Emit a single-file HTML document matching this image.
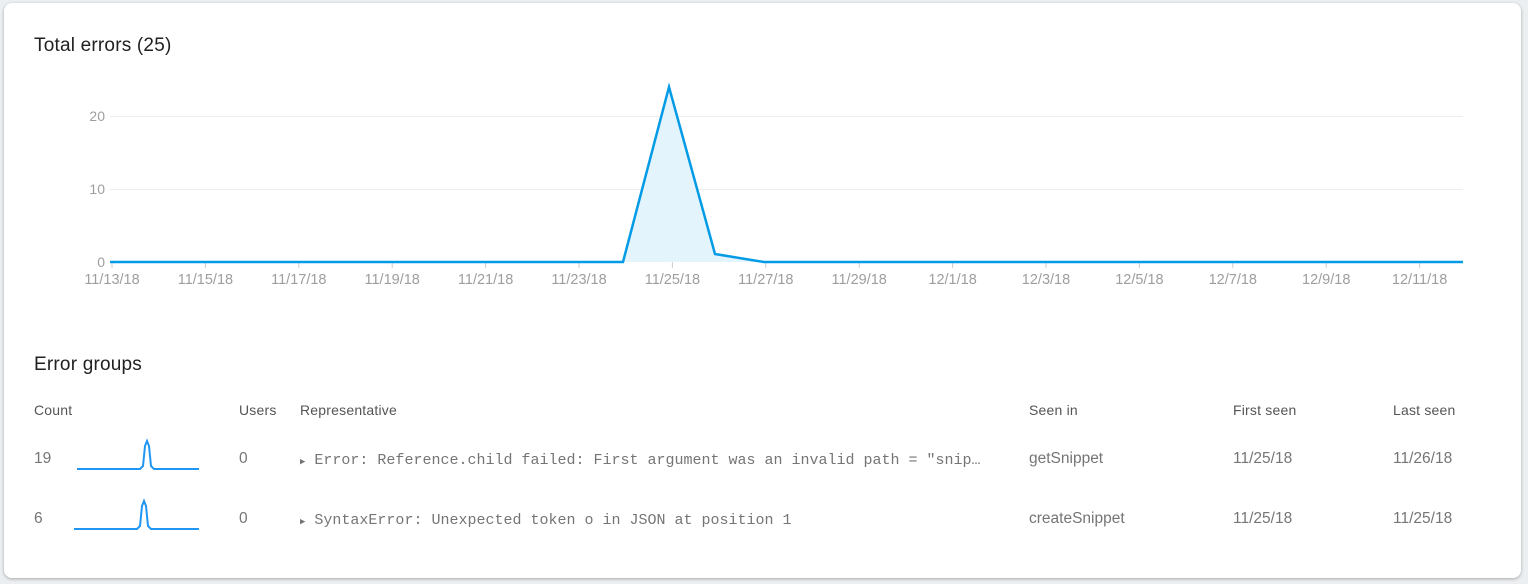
<!DOCTYPE html>
<html><head><meta charset="utf-8"><style>
body{margin:0;width:1528px;height:584px;background:#eceff1;font-family:"Liberation Sans",sans-serif;position:relative;overflow:hidden}
.card{position:absolute;left:4px;top:3px;width:1517px;height:575px;background:#fff;border-radius:8px;box-shadow:0 1px 3px rgba(0,0,0,.3)}
.t{position:absolute;white-space:nowrap}
.h{font-size:19px;color:#212121;letter-spacing:0.2px}
.th{font-size:14px;color:#555;top:402px;letter-spacing:0.2px}
.td{font-size:15.5px;color:#757575}
.mono{font-family:"Liberation Mono",monospace;font-size:15px;color:#757575}
</style></head><body>
<div class="card"></div>
<div class="t h" style="left:34px;top:35px">Total errors (25)</div>
<svg style="position:absolute;left:0;top:0" width="1528" height="300">
<line x1="110" y1="116.5" x2="1463" y2="116.5" stroke="#eee"/>
<line x1="110" y1="189.5" x2="1463" y2="189.5" stroke="#eee"/>
<g font-family="Liberation Sans" font-size="14" fill="#9e9e9e" text-anchor="end">
<text x="105" y="121">20</text><text x="105" y="194">10</text><text x="105" y="267">0</text></g>
<polygon points="110,262 623,262 669,87 715,254 764,262 1463,262" fill="#e3f4fc"/>
<g stroke="#ccc" stroke-width="1">
<line x1="112" y1="262" x2="112" y2="268"/><line x1="205.4" y1="262" x2="205.4" y2="268"/><line x1="298.8" y1="262" x2="298.8" y2="268"/><line x1="392.2" y1="262" x2="392.2" y2="268"/><line x1="485.6" y1="262" x2="485.6" y2="268"/><line x1="579" y1="262" x2="579" y2="268"/><line x1="672.4" y1="262" x2="672.4" y2="268"/><line x1="765.8" y1="262" x2="765.8" y2="268"/><line x1="859.2" y1="262" x2="859.2" y2="268"/><line x1="952.6" y1="262" x2="952.6" y2="268"/><line x1="1046" y1="262" x2="1046" y2="268"/><line x1="1139.4" y1="262" x2="1139.4" y2="268"/><line x1="1232.8" y1="262" x2="1232.8" y2="268"/><line x1="1326.2" y1="262" x2="1326.2" y2="268"/><line x1="1419.6" y1="262" x2="1419.6" y2="268"/>
</g>
<polyline points="110,262 623,262 669,87 715,254 764,262 1463,262" fill="none" stroke="#039be5" stroke-width="2.5"/>
<g font-family="Liberation Sans" font-size="14.5" fill="#9e9e9e" text-anchor="middle">
<text x="112" y="284">11/13/18</text><text x="205.4" y="284">11/15/18</text><text x="298.8" y="284">11/17/18</text><text x="392.2" y="284">11/19/18</text><text x="485.6" y="284">11/21/18</text><text x="579" y="284">11/23/18</text><text x="672.4" y="284">11/25/18</text><text x="765.8" y="284">11/27/18</text><text x="859.2" y="284">11/29/18</text><text x="952.6" y="284">12/1/18</text><text x="1046" y="284">12/3/18</text><text x="1139.4" y="284">12/5/18</text><text x="1232.8" y="284">12/7/18</text><text x="1326.2" y="284">12/9/18</text><text x="1419.6" y="284">12/11/18</text>
</g>
</svg>
<div class="t h" style="left:34px;top:354px">Error groups</div>
<div class="t th" style="left:34px">Count</div>
<div class="t th" style="left:239px">Users</div>
<div class="t th" style="left:300px">Representative</div>
<div class="t th" style="left:1029px">Seen in</div>
<div class="t th" style="left:1233px">First seen</div>
<div class="t th" style="left:1393px">Last seen</div>

<div class="t td" style="left:34px;top:450px">19</div>
<svg style="position:absolute;left:70px;top:436px" width="135" height="40"><polyline points="7,33 70,33 73,30 75,10 77,5 79,10 81,30 84,33 129,33" fill="none" stroke="#2196f3" stroke-width="2"/></svg>
<div class="t td" style="left:239px;top:450px">0</div>
<div class="t mono" style="left:300px;top:452px"><span style="font-size:9px">▶</span> Error: Reference.child failed: First argument was an invalid path = "snip…</div>
<div class="t td" style="left:1029px;top:450px">getSnippet</div>
<div class="t td" style="left:1233px;top:450px">11/25/18</div>
<div class="t td" style="left:1393px;top:450px">11/26/18</div>

<div class="t td" style="left:34px;top:510px">6</div>
<svg style="position:absolute;left:70px;top:496px" width="135" height="40"><polyline points="4,33 67,33 70,30 72,10 74,5 76,10 78,30 81,33 129,33" fill="none" stroke="#2196f3" stroke-width="2"/></svg>
<div class="t td" style="left:239px;top:510px">0</div>
<div class="t mono" style="left:300px;top:512px"><span style="font-size:9px">▶</span> SyntaxError: Unexpected token o in JSON at position 1</div>
<div class="t td" style="left:1029px;top:510px">createSnippet</div>
<div class="t td" style="left:1233px;top:510px">11/25/18</div>
<div class="t td" style="left:1393px;top:510px">11/25/18</div>
</body></html>
